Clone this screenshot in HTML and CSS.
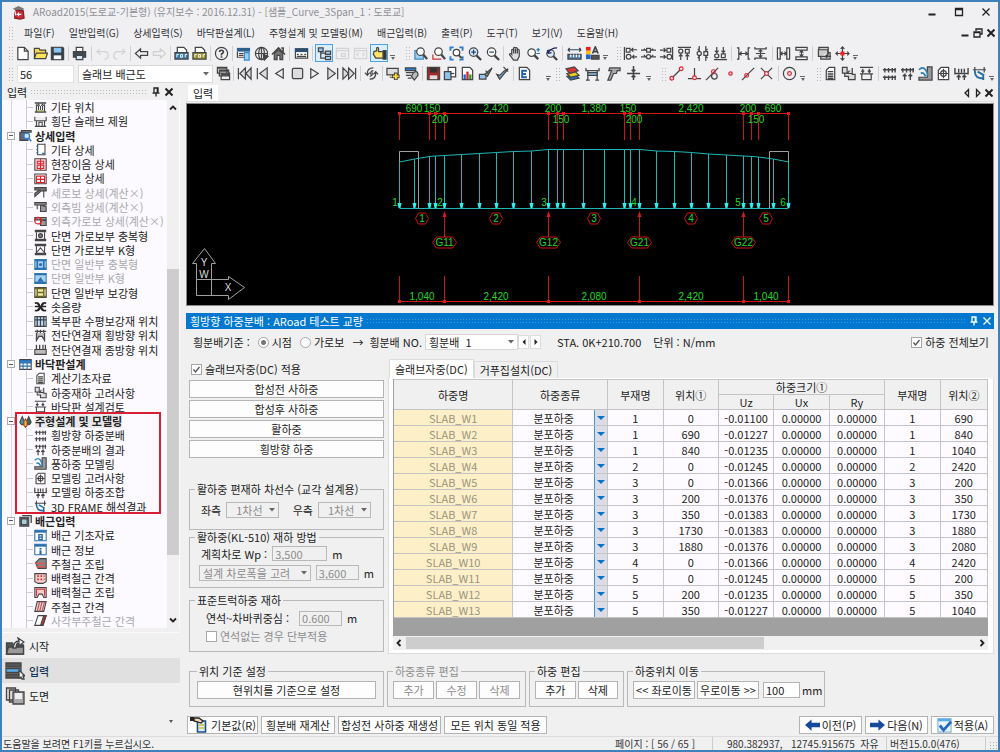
FILE: index.html
```html
<!DOCTYPE html>
<html lang="ko">
<head>
<meta charset="utf-8">
<title>ARoad2015</title>
<link rel="stylesheet" href="styles.css">
</head>
<body>
<svg class="sprite" aria-hidden="true">
  <symbol id="app" viewBox="0 0 16 16"><path d="M2 4l6-3 6 3-2 2H4z" fill="#777" stroke="none"/><path d="M4 6h9l1 8-4 1-6-1z" fill="#c92b35" stroke="#8d1b25"/><path d="M1 5l3 1 1 5M6 10h5M8 8v4" stroke="#fff"/></symbol>
  <symbol id="new" viewBox="0 0 16 16"><path d="M3 1.500h7l4 4v9H3zM10 1.500v4h4" fill="#fff"/></symbol>
  <symbol id="open" viewBox="0 0 16 16"><path d="M1.500 13.500v-11h5l1 2h6v3" fill="#f6d94c"/><path d="M1.500 13.500l2-6h12l-2 6z" fill="#ffe45c"/></symbol>
  <symbol id="save" viewBox="0 0 16 16"><path d="M1.500 1.500h12l1 1v12h-13z" fill="#33414f"/><path d="M4 2h8v5H4z" fill="#8cc4ee" stroke="none"/><path d="M4 10h8v4H4z" fill="#fff" stroke="none"/></symbol>
  <symbol id="print" viewBox="0 0 16 16"><path d="M4.500 6V1.500h7V6" fill="#fff"/><path d="M1.500 6h13v6h-13z" fill="#3f4a55"/><path d="M4.500 10h7v4.500h-7z" fill="#d5e7f5"/></symbol>
  <symbol id="undo" viewBox="0 0 16 16"><path d="M5 3L2 6l4 3M2 6h8q4 0 4 4t-4 4" stroke="#d2d2d2"/></symbol>
  <symbol id="redo" viewBox="0 0 16 16"><path d="M11 3l3 3-4 3M14 6H6q-4 0-4 4t4 4" stroke="#d2d2d2"/></symbol>
  <symbol id="back" viewBox="0 0 16 16"><path d="M1.500 8L7 3v3h7.500v4H7v3z"/></symbol>
  <symbol id="fwd" viewBox="0 0 16 16"><path d="M14.500 8L9 3v3H1.500v4H9v3z" stroke="#cfcfcf"/></symbol>
  <symbol id="pdf" viewBox="0 0 16 16"><path d="M3.500 13V1.500h7l3 3V13" fill="#fff"/><path d="M1 7h14v7H1z" fill="#3978ad"/><path d="M3 12V9h2M7 12V9h2v3zM12 12V9h2" stroke="#fff" stroke-width="1"/></symbol>
  <symbol id="pdf2" viewBox="0 0 16 16"><path d="M3.500 13V1.500h7l3 3V13" fill="#fff"/><path d="M1 7h14v7H1z" fill="#9a9230"/><path d="M3 12V9h2M7 12V9h2v3zM12 12V9h2" stroke="#fff" stroke-width="1"/></symbol>
  <symbol id="help" viewBox="0 0 16 16"><circle cx="8" cy="8" r="6.500"/><path d="M6 6.500q0-2 2-2t2 2q0 1-2 2V10M8 11v1.500" stroke-width="1.800"/></symbol>
  <symbol id="win" viewBox="0 0 16 16"><path d="M1 2h14v4H1z" fill="#2f5f8c" stroke="none"/><path d="M1.500 6v6h8" fill="#fff"/><path d="M3 8h5M3 10h5"/><path d="M9 7h5v8H9z" fill="#9fd0f3" stroke="#3b8bc8"/></symbol>
  <symbol id="globe" viewBox="0 0 16 16"><circle cx="8" cy="8" r="6.500"/><ellipse cx="8" cy="8" rx="3" ry="6.500"/><path d="M1.500 8h13M8 1.500v13"/><path d="M10 9l5 2-4 4z" fill="#444"/></symbol>
  <symbol id="home" viewBox="0 0 16 16"><path d="M1 9l7-7 7 7M11 2h2v4" stroke-width="1.600"/><path d="M3.500 8v6.500h3V10h3v4.500h3V8L8 4z" fill="#777"/></symbol>
  <symbol id="win2" viewBox="0 0 16 16"><path d="M1.500 3h13v10h-13z" fill="#fff"/><path d="M1 2.500h14v4H1z" fill="#2f4f72" stroke="none"/><path d="M3 9h2M7 9h2M11 9h2M3 11h10"/></symbol>
  <symbol id="outline" viewBox="0 0 16 16"><path d="M4 6v7h5M4 7.500h5"/><path d="M1.500 2h5v4h-5zM9 5.500h5.500v3.500H9zM9 11h5.500v3.500H9z" fill="#9cc9f0"/></symbol>
  <symbol id="pan1" viewBox="0 0 16 16"><path d="M1.500 2.500h13v11h-13zM1.500 5h13M7 8h4v3H7z" stroke="#d4d4d4"/></symbol>
  <symbol id="pan2" viewBox="0 0 16 16"><path d="M1.500 2.500h13v11h-13zM1.500 5h13M6 7L4 9l2 2M10 7l2 2-2 2" stroke="#d4d4d4"/></symbol>
  <symbol id="point" viewBox="0 0 16 16"><path d="M2 6l3-1V2q2-1 2 1v3h5v7H4L1.500 9z" fill="#ffe36b"/><path d="M12 5h3v9h-3z" fill="#333"/></symbol>
  <symbol id="zpage" viewBox="0 0 16 16"><path d="M2 5h9v9H2z" fill="#9fd0f3" stroke="#3b8bc8"/><circle cx="8" cy="6" r="4" fill="#fff"/><path d="M11 9l4 5" stroke-width="2.400"/></symbol>
  <symbol id="zall" viewBox="0 0 16 16"><path d="M2 9v5h9" stroke="#c33"/><circle cx="8" cy="6" r="4" fill="#fff"/><path d="M11 9l4 5" stroke-width="2.400"/></symbol>
  <symbol id="zext" viewBox="0 0 16 16"><path d="M1.500 5V1.500H5M11 1.500h3.500V5M1.500 11v3.500H5M14.500 11v3.500H11" stroke="#2c7fd0" stroke-width="2"/><circle cx="8" cy="7" r="3.500" fill="#fff"/><path d="M10.500 10l3 3" stroke-width="2"/></symbol>
  <symbol id="zin" viewBox="0 0 16 16"><circle cx="7" cy="6.500" r="4.500" fill="#d8eafa"/><path d="M10 10l5 5" stroke-width="2.400"/><path d="M4.500 6.500h5M7 4v5" stroke="#246"/></symbol>
  <symbol id="zout" viewBox="0 0 16 16"><circle cx="7" cy="6.500" r="4.500" fill="#fff"/><path d="M10 10l5 5" stroke-width="2.400"/><path d="M4.500 6.500h5" stroke="#246"/></symbol>
  <symbol id="pan" viewBox="0 0 16 16"><path d="M4 9V4q1-1 2 0V2q1-1 2 0v0q1-1 2 1v1q2-1 2 1v6l-2 4H6L1.500 9q1-2 2.500 0z" fill="#ddd"/><path d="M6 4v4M8 3v5M10 4v4"/></symbol>
  <symbol id="zdyn" viewBox="0 0 16 16"><circle cx="6" cy="7" r="4" fill="#fff"/><path d="M9 10l4 4" stroke-width="2.400"/><path d="M11 4h4M13 2v4M11 8h4" stroke="#27b"/></symbol>
  <symbol id="zprev" viewBox="0 0 16 16"><circle cx="7" cy="8" r="4" fill="#d8eafa"/><path d="M10 11l4 4" stroke-width="2.400"/><path d="M4 8q3-6 10-6M4 8V4M4 8l4-1" stroke="#226"/></symbol>
  <symbol id="rule" viewBox="0 0 16 16"><path d="M1 4h14M1 4l2-2M1 4l2 2M15 4l-2-2M15 4l-2 2" stroke="#345"/><path d="M1 9h14v5H1z" fill="#4c7fae"/><path d="M4 9v3M7 9v3M10 9v3M13 9v3" stroke="#fff"/></symbol>
  <symbol id="color" viewBox="0 0 16 16"><path d="M1 1h5v4H1z" fill="#e22" stroke="none"/><path d="M1 5h5v4H1z" fill="#fb0" stroke="none"/><path d="M1 9h5v5H1z" fill="#26c" stroke="none"/><path d="M8 8l3-7 3 7M9 6h4" stroke-width="1.800"/><path d="M7 10h8v4H7z" fill="#555"/></symbol>
  <symbol id="al1" viewBox="0 0 16 16"><path d="M1.500 1v14M3.500 2.500h4v4h-4z"/><circle cx="6" cy="11.500" r="2.500"/><path d="M15 4H9l2-2M9 4l2 2M15 11.500h-5l2-2M10 11.500l2 2"/></symbol>
  <symbol id="al2" viewBox="0 0 16 16"><path d="M6 2.500h4v4H6zM0 4.500h5L3 3M16 4.500h-5l2-1.500M0 11.500h5l-2-2M16 11.500h-5l2-2"/><circle cx="8" cy="11.500" r="2.200"/></symbol>
  <symbol id="al3" viewBox="0 0 16 16"><path d="M14.500 1v14M8.500 2.500h4v4h-4zM1 4.500h6L5 2M7 4.500L5 6.500M1 11.500h6l-2-2M7 11.500l-2 2"/><circle cx="11" cy="11.500" r="2.500"/></symbol>
  <symbol id="al4" viewBox="0 0 16 16"><path d="M1 1.500h14M9 3.500h4v4H9zM4 15V9L2 11M4 9l2 2M11 15V9l-2 2M11 9l2 2"/><circle cx="4" cy="5.500" r="2.200"/></symbol>
  <symbol id="al5" viewBox="0 0 16 16"><path d="M9.500 6h4v4h-4zM4.500 0v5L3 3M4.500 16v-5L3 13M11.500 0v5l2-2M11.500 16v-5l2 2"/><circle cx="4.500" cy="8" r="2.200"/></symbol>
  <symbol id="al6" viewBox="0 0 16 16"><path d="M1 14.500h14M9 8.500h4v4H9zM4 1v6L2 5M4 7l2-2M11 1v6L9 5M11 7l2-2"/><circle cx="4" cy="10.500" r="2.200"/></symbol>
  <symbol id="sp1" viewBox="0 0 16 16"><path d="M1 2h2v12H1M15 2h-2v12h2M4 8h8M6 6L4 8l2 2M10 6l2 2-2 2"/></symbol>
  <symbol id="sp2" viewBox="0 0 16 16"><path d="M2 1v2h12V1M2 15v-2h12v2M8 4v8M6 6l2-2 2 2M6 10l2 2 2-2M3 8h10"/></symbol>
  <symbol id="sp3" viewBox="0 0 16 16"><path d="M1.500 2h3v12h-3zM11.500 2h3v12h-3zM5 8h6M7 6L5 8l2 2M9 6l2 2-2 2"/></symbol>
  <symbol id="sp4" viewBox="0 0 16 16"><path d="M2 1.500h12v3H2zM2 11.500h12v3H2zM8 5v6M6 7l2-2 2 2M6 9l2 2 2-2"/></symbol>
  <symbol id="stackw" viewBox="0 0 16 16"><path d="M2 4V1.500h10V9M1.500 4h10v7h-10zM4 11v3h10V7h-2" fill="#ccc"/><path d="M15 11H9l2-2M9 11l2 2"/></symbol>
  <symbol id="move" viewBox="0 0 16 16"><path d="M8 1v14M1 8h14M6 3l2-2 2 2M6 13l2 2 2-2M3 6L1 8l2 2M13 6l2 2-2 2"/><path d="M6.500 6.500h3v3h-3z" fill="#e22" stroke="#e22"/></symbol>
  <symbol id="casc" viewBox="0 0 16 16"><path d="M1.500 1.500h10v6h-10zM3.500 4.500h10v6h-10zM5.500 7.500h9v7h-9z" fill="#eee"/><path d="M2 2h9M4 5h9M6 9h8" stroke-width="2"/></symbol>
  <symbol id="ff0" viewBox="0 0 16 16"><path d="M1.500 2v12M9 2L3 8l6 6zM15 2L9.500 8l5.500 6z" fill="#ddd"/></symbol>
  <symbol id="f0" viewBox="0 0 16 16"><path d="M2.500 2v12M13 2L5 8l8 6z" fill="#ddd"/></symbol>
  <symbol id="pv" viewBox="0 0 16 16"><path d="M12 3L4 8l8 5z" fill="#eee"/></symbol>
  <symbol id="stop" viewBox="0 0 16 16"><rect x="2.500" y="2.500" width="11" height="11" rx="1.500" fill="#ddd"/></symbol>
  <symbol id="nx" viewBox="0 0 16 16"><path d="M4 3l8 5-8 5z" fill="#eee"/></symbol>
  <symbol id="f1" viewBox="0 0 16 16"><path d="M13.500 2v12M3 2l8 6-8 6z" fill="#ddd"/></symbol>
  <symbol id="ff1" viewBox="0 0 16 16"><path d="M14.500 2v12M1 2l6 6-6 6zM7 2l6 6-6 6z" fill="#ddd"/></symbol>
  <symbol id="sync" viewBox="0 0 16 16"><path d="M10 2Q3 2 3.500 9M1 7l2.500 3L6 7M6 14q7 0 6.500-7M10 9l2.500-3L15 9M10 5q-3 0-3 4M6 11q3 0 3-4"/></symbol>
  <symbol id="addw" viewBox="0 0 16 16"><path d="M1 2.500h12v7H1zM4 12h5" fill="#ddd"/><path d="M10.500 7v8M6.500 11h8" stroke="#444" stroke-width="4"/><path d="M10.500 8v6M7.500 11h6" stroke="#fd3" stroke-width="2"/></symbol>
  <symbol id="cfg" viewBox="0 0 16 16"><path d="M1.500 2h11v3h-11z" fill="#2c7fd0"/><path d="M2 7h8M2 10h6M4 13h4"/><path d="M10 7q5-3 5 3l-4 5-3-4z" fill="#bbb"/></symbol>
  <symbol id="redsave" viewBox="0 0 16 16"><path d="M1.500 1.500h13v13h-13z" fill="#a12a2a"/><path d="M4 2h8v5H4z" fill="#333" stroke="none"/><path d="M4 10h8v4H4z" fill="#ddd" stroke="none"/></symbol>
  <symbol id="docs" viewBox="0 0 16 16"><path d="M5.500 1.500h8v10h-8z" fill="#fff"/><path d="M1.500 6h7v8.500h-7z" fill="#8ec1ec"/><path d="M8 8h4"/></symbol>
  <symbol id="chart" viewBox="0 0 16 16"><path d="M2.500 1.500h8l3 3v10h-11z" fill="#fff"/><path d="M5 14V9" stroke="#26c" stroke-width="2.500"/><path d="M8 14V6" stroke="#d22" stroke-width="2.500"/><path d="M11 14V9" stroke="#292" stroke-width="2.500"/></symbol>
  <symbol id="brush" viewBox="0 0 16 16"><path d="M1.500 9h7v5h-7z" fill="#9cc5ea"/><path d="M15 2l-5 9-3-2zM8 5l3 3" fill="#999"/></symbol>
  <symbol id="check" viewBox="0 0 16 16"><path d="M2 9l3 5 9-11-4 2-5 5z" fill="#7fa9cf"/><path d="M9 1l5 5"/></symbol>
  <symbol id="edoc" viewBox="0 0 16 16"><path d="M2.500 1.500h8l3 3v10h-11z" fill="#fff"/><path d="M10.500 5h-5v7h5M5.500 8.500h4" stroke="#1e5fae" stroke-width="2"/></symbol>
  <symbol id="layers" viewBox="0 0 16 16"><path d="M2 11l9-2 4 4-9 2z" fill="#2a6fc0"/><path d="M2 8l9-2 4 4-9 2z" fill="#ecc820"/><path d="M1 3l9-2 4 4-9 3z" fill="#d33"/></symbol>
  <symbol id="bridge" viewBox="0 0 16 16"><path d="M1 2v3h14V2M3 5v10M13 5v10M1 15h4M11 15h4"/><path d="M3 7h10v3H3z" fill="#8ec1ec"/></symbol>
  <symbol id="drill" viewBox="0 0 16 16"><path d="M4 2h11v3h-3l-1 3H8l-3 7H2l4-10H3z" fill="#aaa"/></symbol>
  <symbol id="split" viewBox="0 0 16 16"><path d="M8 0v15M1 8h14M6 4l2 2 2-2M6 12l2-2 2 2" stroke-width="1.600"/></symbol>
  <symbol id="sn1" viewBox="0 0 16 16"><path d="M4 12l8-8"/><circle cx="3" cy="13" r="2" stroke="#d23"/><circle cx="13" cy="3" r="2" stroke="#d23"/></symbol>
  <symbol id="sn2" viewBox="0 0 16 16"><path d="M8 2v9M1 13.500h5M10 13.500h5"/><circle cx="8" cy="12.500" r="2" stroke="#d23"/></symbol>
  <symbol id="sn3" viewBox="0 0 16 16"><path d="M1 15L14 2"/><circle cx="10" cy="11" r="3"/><circle cx="9" cy="6" r="2" stroke="#d23"/></symbol>
  <symbol id="sn4" viewBox="0 0 16 16"><circle cx="8" cy="8" r="1.800" stroke="#d23"/></symbol>
  <symbol id="sn5" viewBox="0 0 16 16"><path d="M1 15L14 2"/><circle cx="6" cy="10" r="2" stroke="#d23"/></symbol>
  <symbol id="sn6" viewBox="0 0 16 16"><path d="M2 2l12 12M14 2L2 14"/><circle cx="8" cy="8" r="2" stroke="#d23" fill="#fff"/></symbol>
  <symbol id="target" viewBox="0 0 16 16"><circle cx="8" cy="8" r="6.500"/><circle cx="8" cy="8" r="2" stroke="#d23"/></symbol>
  <symbol id="calc" viewBox="0 0 16 16"><path d="M3.500 4.500l3-3h6v13h-9z" fill="#fff"/><path d="M5 6h6M5 8.500h6M5 11h6M5 13h6" stroke-width="1.500"/></symbol>
  <symbol id="cond" viewBox="0 0 16 16"><path d="M1.500 1.500h5v6h-5zM4 8v3h4v3.500h7V9h-3V2M9 5l-2 3h5" fill="#ddd"/></symbol>
  <symbol id="deck" viewBox="0 0 16 16"><path d="M1 1.500h14M1 8.500h14M3 8.500v6h10v-6M4 3v4M2.500 5L4 7l1.500-2M11 3v4M9.500 5L11 7l1.500-2"/></symbol>
  <symbol id="dist" viewBox="0 0 16 16"><path d="M1 4h14M1 12h14M3 2v5M7 2v5M11 2v5M14 2v5M3 10v5M7 10v5M11 10v5M14 10v5" stroke-width="1.500"/></symbol>
  <symbol id="dres" viewBox="0 0 16 16"><path d="M1 4h14M3 2v5M7 2v5M11 2v5M14 2v5M5 15V9L3 11M5 9l2 2M11 15V9l-2 2M11 9l2 2" stroke-width="1.500"/></symbol>
  <symbol id="wind" viewBox="0 0 16 16"><path d="M10 1h5v14H1v-3h9z" fill="#999"/><path d="M1 4q4-4 7 0t2 7M3 8q3-2 5 3" stroke="#2c7fb8" stroke-width="1.800"/></symbol>
  <symbol id="mcon" viewBox="0 0 16 16"><path d="M2.500 4.500l3-3h8v13h-11z" fill="#fff"/><circle cx="8" cy="8" r="3"/><path d="M8 3v10M3 8h10"/></symbol>
  <symbol id="comb" viewBox="0 0 16 16"><path d="M1 2v7M15 2v7M1 8h14M5 3v4M8 3v4M11 3v4M5 15v-5l-2 2M5 10l2 2M11 15v-5l-2 2M11 10l2 2" stroke-width="1.500"/></symbol>
  <symbol id="frame" viewBox="0 0 16 16"><path d="M1 4h14M3 1v6M13 1v6"/><path d="M3 5q0 9 9 8M12 10v5M6 6l7 4" stroke="#246fa8" stroke-width="2"/></symbol>
  <symbol id="pos" viewBox="0 0 16 16"><path d="M1 2.500h14M1 13.500h14" stroke-width="2"/><path d="M3 4v9M13 4v9M5.500 6v5M8 6v5M10.500 6v5M4 6l1.500-2L7 6M9 6l1.500-2L12 6"/><path d="M4 12h8" stroke="#a8c040"/></symbol>
  <symbol id="slab" viewBox="0 0 16 16"><path d="M1 2v5h14V2M3 7v7h3V9h4v5h3V7M1 14h14" fill="#eee"/></symbol>
  <symbol id="detail" viewBox="0 0 16 16"><path d="M1 4h10v10H1z" fill="#667"/><path d="M3 2h12v2H3z" fill="#999"/><circle cx="9.500" cy="8.500" r="3.500" fill="#cfe8ff" stroke="#2c7fd0" stroke-width="1.600"/><path d="M12 11l3 4" stroke="#2c7fd0" stroke-width="2"/></symbol>
  <symbol id="etc" viewBox="0 0 16 16"><path d="M4.500 1.500h9v13h-9z" fill="#fff"/><path d="M3 4h2M3 8h2M3 12h2M10 13h3" stroke="#2c6fae" stroke-width="2"/></symbol>
  <symbol id="joint" viewBox="0 0 16 16"><path d="M1 1h14v14H1z" fill="#fbd5d5"/><path d="M4 4h8v3H4zM4 9h8v4H4zM8 1v14" stroke="#d23"/></symbol>
  <symbol id="cross" viewBox="0 0 16 16"><path d="M1 2.500h14v12H1z" fill="#fff"/><path d="M3 5h10v8H3zM3 9h10M8 5v8" stroke="#d23" stroke-width="1.500"/></symbol>
  <symbol id="beam" viewBox="0 0 16 16"><path d="M1 2h14v4H9L1 13v-4l6-4H1z" fill="#777"/><path d="M12 6v8"/></symbol>
  <symbol id="outer" viewBox="0 0 16 16"><path d="M1 2h14v3H1zM4 5v5M8 5v8h7V7z" fill="#999"/></symbol>
  <symbol id="outr" viewBox="0 0 16 16"><path d="M1 3h14v3H1zM8 6v7h7V7z" fill="#999"/><circle cx="5" cy="7" r="4" stroke="#d22" stroke-width="1.600"/></symbol>
  <symbol id="sec1" viewBox="0 0 16 16"><path d="M1 2.500h14M1 13.500h14" stroke-width="3"/><path d="M3 4v9M13 4v9"/><circle cx="8" cy="8" r="2.500" fill="#777"/></symbol>
  <symbol id="sec2" viewBox="0 0 16 16"><path d="M1 2.500h14M1 13.500h14" stroke-width="3"/><path d="M3 4v9M13 4v9M3 12l5-6 5 6"/></symbol>
  <symbol id="sec3" viewBox="0 0 16 16"><path d="M1 2h14v12H1z" fill="#a9d2f3" stroke="#2c7fb8"/><path d="M1 3h14M1 13h14M4 4v9M12 4v9" stroke="#2c6fae" stroke-width="2"/><circle cx="8" cy="8" r="2" fill="#2c6fae" stroke="none"/></symbol>
  <symbol id="sec4" viewBox="0 0 16 16"><path d="M1 2h14v12H1z" fill="#a9d2f3" stroke="#2c7fb8"/><path d="M1 3h14M1 13h14" stroke="#2c6fae" stroke-width="2"/><path d="M4 12l4-6 4 6z" fill="#2c6fae" stroke="none"/></symbol>
  <symbol id="sec5" viewBox="0 0 16 16"><path d="M1 2h14v12H1z" fill="#f3eda0"/><path d="M1 3h14M1 13h14M4 4v9M12 4v9M4 8h8" stroke="#6b6528" stroke-width="1.700"/></symbol>
  <symbol id="camber" viewBox="0 0 16 16"><path d="M1 4q5-2 6 4t-6 5M15 4Q10 2 9 8t6 5M1 8h14M4 4l8 9M12 4l-8 9" stroke="#222" stroke-width="2"/></symbol>
  <symbol id="web" viewBox="0 0 16 16"><path d="M1 2h14v12H1z" fill="#cfe0ee"/><path d="M4 2v12M8 2v12M12 2v12M1 6h14" stroke="#345" stroke-width="1.600"/></symbol>
  <symbol id="shear1" viewBox="0 0 16 16"><path d="M1 3h14M4 1v4M8 1v4M12 1v4M3 5v9l3-5h4l3 5V5" fill="#bbb" stroke-width="1.500"/></symbol>
  <symbol id="shear2" viewBox="0 0 16 16"><path d="M1 8h14v6H1z" fill="#bbb"/><path d="M3 2v6M7 2v6M11 2v6M14 2v6" stroke-width="1.600"/></symbol>
  <symbol id="grid" viewBox="0 0 16 16"><path d="M1 2h14v12H1z" fill="#fff"/><path d="M1 3h14v3H1z" fill="#2c7fd0" stroke="#2c6fae"/><path d="M1 10h14M5 6v8M10 6v8" stroke="#2c6fae"/></symbol>
  <symbol id="model" viewBox="0 0 16 16"><path d="M1 9l3-7 3 7q-3 6-6 0z" fill="#2c9fb8"/><path d="M9 9l3-7 3 7q-3 6-6 0z" fill="#2a6f50"/><path d="M6 8l2-3 2 3v5l-2 2-2-2z" fill="#f2b82c" stroke="#a33"/></symbol>
  <symbol id="rebar" viewBox="0 0 16 16"><path d="M1 4h11v11H1z" fill="#667"/><path d="M3 6h7v7H3z" fill="#a9cbd8"/><path d="M4 2h11v9" stroke-width="1.600"/></symbol>
  <symbol id="bi" viewBox="0 0 16 16"><path d="M1 1.500h14v13H1z" fill="#fff" stroke="#2c6fae"/><path d="M1 3h14" stroke="#2c6fae" stroke-width="3"/><path d="M6 7v6h4v-6zM6 10h4" stroke="#1e5fae" stroke-width="1.600"/></symbol>
  <symbol id="ii" viewBox="0 0 16 16"><path d="M1 1.500h14v13H1z" fill="#fff" stroke="#2c6fae"/><path d="M1 3h14" stroke="#2c6fae" stroke-width="3"/><path d="M8 9v5M8 6v2" stroke="#1e5fae" stroke-width="2.400"/></symbol>
  <symbol id="rb1" viewBox="0 0 16 16"><path d="M2 7l5-5h8v12H5z" fill="#888"/><path d="M1 8h13M3 12h11" stroke="#d55" stroke-width="2"/></symbol>
  <symbol id="rb2" viewBox="0 0 16 16"><path d="M1 2h14v10l-4 2H5l-4-2z" fill="#f6cccc"/><path d="M4 5h2M8 5h2M12 5h1M4 9h2M8 9h2M12 9h1" stroke="#c33" stroke-width="2"/></symbol>
  <symbol id="rb3" viewBox="0 0 16 16"><path d="M1 2h14v12h-3l-2-4H6l-2 4H1z" fill="#f6cccc"/><path d="M3 4h10M3 4v8M13 4v8" stroke="#c33"/></symbol>
  <symbol id="rb4" viewBox="0 0 16 16"><path d="M4 2h11l-3 12H1z" fill="#f6cccc"/><path d="M7 2L4 14M10 2L7 14M13 2l-3 12" stroke="#a55"/></symbol>
  <symbol id="rb5" viewBox="0 0 16 16"><path d="M5 2h10l-4 12H1z" fill="#fff"/><path d="M12 2h3l-4 12H8z" fill="#b33"/></symbol>
  <symbol id="start" viewBox="0 0 20 18"><path d="M1.500 6h6l1 2h10v9h-17z" fill="#555"/><path d="M1.500 17l2-7h15v7z" fill="#999"/><path d="M8 11q1-7 6-7l-1-3 6 4-5 4v-3q-3 0-3 5z" fill="#e8f0f6"/></symbol>
  <symbol id="input" viewBox="0 0 20 18"><path d="M1 1h15v4H1zM1 12h15v4H1z" fill="#555"/><path d="M1 6.500h15v4H1z" fill="#58aee8"/><path d="M14 8v8l2-1 1 2h2l-1-3h2z" fill="#eee"/></symbol>
  <symbol id="sheet" viewBox="0 0 20 18"><path d="M1.500 1h9v12h-9zM4.500 3h9v12h-9z" fill="#ddd"/><path d="M8 5h11v12H8z" fill="#aaa"/><path d="M10 6h7v6h-7z" fill="#eee" stroke="none"/></symbol>
  <symbol id="base" viewBox="0 0 20 18"><path d="M8.500 5h8v11h-8z" fill="#d9edfb" stroke="#1d4d85" stroke-width="1.600"/><path d="M10 9h5M10 12h5" stroke="#d4c322"/><path d="M1 1h4v4H1z" fill="#222" stroke="none"/><path d="M5 2h5l4 3-2 2-3-1-4-1z" fill="#f7d7b4" stroke="#222"/></symbol>
  <symbol id="arl" viewBox="0 0 16 12"><path d="M0 6l7-6v3.500h9v5H7V12z" fill="#164a9c" stroke="none"/></symbol>
  <symbol id="arr" viewBox="0 0 16 12"><path d="M16 6L9 0v3.500H0v5h9V12z" fill="#164a9c" stroke="none"/></symbol>
  <symbol id="apply" viewBox="0 0 16 16"><path d="M1 1h14v14H1z" fill="#eaf5fd" stroke="#8cb8d8"/><path d="M1 2h14" stroke="#5aaee6" stroke-width="3"/><path d="M3 8l4 5 8-9" stroke="#2569c8" stroke-width="3"/></symbol>
  <symbol id="pin" viewBox="0 0 10 10"><path d="M3 1h4v5H3zM1.500 6.200h7M5 6v3.500M6.300 1v5"/></symbol>
  <symbol id="x" viewBox="0 0 10 10"><path d="M1.500 1.500l7 7M8.500 1.500l-7 7"/></symbol>
  <symbol id="min" viewBox="0 0 10 10"><path d="M1.500 7.500h7" stroke-width="2"/></symbol>
  <symbol id="max" viewBox="0 0 10 10"><path d="M1.500 1.500h7v7h-7zM1.500 2.500h7"/></symbol>
  <symbol id="rest" viewBox="0 0 10 10"><path d="M3 3V1h6v5H7M1 4h6v5H1zM1 4.500h6"/></symbol>
  <symbol id="up" viewBox="0 0 10 10"><path d="M2 6.500l3-3 3 3"/></symbol>
  <symbol id="dn" viewBox="0 0 10 10"><path d="M2 3.500l3 3 3-3"/></symbol>
  <symbol id="lf" viewBox="0 0 10 10"><path d="M6.500 2l-3 3 3 3"/></symbol>
  <symbol id="rt" viewBox="0 0 10 10"><path d="M3.500 2l3 3-3 3"/></symbol>
  <symbol id="tl" viewBox="0 0 10 10"><path d="M6.500 1.500v7L3 5z"/></symbol>
  <symbol id="tr" viewBox="0 0 10 10"><path d="M3.500 1.500v7L7 5z"/></symbol>
  <symbol id="tlf" viewBox="0 0 10 10"><path d="M6.500 2v6L3.500 5z" fill="#222" stroke="none"/></symbol>
  <symbol id="trf" viewBox="0 0 10 10"><path d="M3.500 2v6l3-3z" fill="#222" stroke="none"/></symbol>
</svg>

<div class="window">
  <header class="titlebar">
    <svg class="ic app-icon"><use href="#app"/></svg>
    <h1 class="title">ARoad2015(도로교-기본형) (유지보수 : 2016.12.31) - [샘플_Curve_3Span_1 : 도로교]</h1>
    <div class="win-controls">
      <button class="bare" aria-label="최소화"><svg class="sm"><use href="#min"/></svg></button>
      <button class="bare" aria-label="최대화"><svg class="sm"><use href="#max"/></svg></button>
      <button class="bare" aria-label="닫기"><svg class="sm"><use href="#x"/></svg></button>
    </div>
  </header>
  <nav class="menubar">
    <span class="grip"></span>
    <div class="menus">
      <button class="menu">파일(F)</button><button class="menu">일반입력(G)</button><button class="menu">상세입력(S)</button><button class="menu">바닥판설계(L)</button><button class="menu">주형설계 및 모델링(M)</button><button class="menu">배근입력(B)</button><button class="menu">출력(P)</button><button class="menu">도구(T)</button><button class="menu">보기(V)</button><button class="menu">도움말(H)</button>
    </div>
    <div class="mdi-controls">
      <button class="bare" aria-label="문서 최소화"><svg class="sm"><use href="#min"/></svg></button>
      <button class="bare" aria-label="문서 복원"><svg class="sm"><use href="#rest"/></svg></button>
      <button class="bare bold" aria-label="문서 닫기"><svg class="sm"><use href="#x"/></svg></button>
    </div>
  </nav>
  <div class="toolbar">
    <div class="band band-file" data-tools="grip new open save | print | undo redo | back fwd | pdf pdf2 | help | win globe home | win2 | *outline pan1 pan2 *point ovf"></div>
    <div class="band band-zoom" data-tools="grip zpage zall zext zin zout | pan zdyn zprev | rule color ovf"></div>
    <div class="band band-align" data-tools="grip al1 al2 al3 al4 al5 al6 | sp1 sp2 | sp3 sp4 | stackw move ovf"></div>
  </div>
  <div class="toolbar">
    <div class="page-pick">
      <span class="grip"></span>
      <input class="page-no" aria-label="도면 번호" value="56">
      <select class="select page-name" aria-label="도면 이름"><option>슬래브 배근도</option></select>
    </div>
    <div class="band band-play" data-tools="casc | ff0 f0 pv stop nx f1 ff1 | sync | addw cfg | redsave docs chart brush check | edoc"></div>
    <div class="band band-view" data-tools="dbl grip layers bridge drill split ovf"></div>
    <div class="band band-snap" data-tools="grip sn1 sn2 sn3 sn4 sn5 sn6 | target ovf"></div>
    <div class="band band-model" data-tools="grip calc cond deck | dist dres wind mcon comb frame ovf"></div>
  </div>

  <div class="work">
    <aside class="side">
      <div class="pane-head">
        <span>입력</span><span class="hatch"></span>
        <button class="bare" aria-label="고정"><svg class="sm"><use href="#pin"/></svg></button>
        <button class="bare bold" aria-label="닫기"><svg class="sm"><use href="#x"/></svg></button>
      </div>
      <div class="tree-box">
        <div class="tree" id="nav-tree"></div>
        <div class="vbar">
          <svg class="sm"><use href="#up"/></svg>
          <div class="vtrack"><div class="vthumb"></div></div>
          <svg class="sm"><use href="#dn"/></svg>
        </div>
      </div>
      <nav class="sections">
        <button class="section"><svg class="ic big"><use href="#start"/></svg>시작</button>
        <button class="section current"><svg class="ic big"><use href="#input"/></svg>입력</button>
        <button class="section"><svg class="ic big"><use href="#sheet"/></svg>도면</button>
        <button class="more" aria-label="더 보기"></button>
      </nav>
    </aside>

    <main class="main">
      <div class="doc-tabs">
        <button class="doc-tab">입력</button>
        <div class="tab-nav">
          <button class="bare" aria-label="이전 탭"><svg class="sm"><use href="#tl"/></svg></button>
          <button class="bare" aria-label="다음 탭"><svg class="sm"><use href="#tr"/></svg></button>
          <button class="bare bold" aria-label="탭 닫기"><svg class="sm"><use href="#x"/></svg></button>
        </div>
      </div>
      <div class="canvas"><svg class="drawing" id="drawing" viewBox="187 104 806 201"></svg></div>

      <section class="panel">
        <div class="panel-head">
          <h2 class="panel-title">횡방향 하중분배 : ARoad 테스트 교량</h2><span class="hatch light"></span>
          <button class="bare" aria-label="고정"><svg class="sm"><use href="#pin"/></svg></button>
          <button class="bare" aria-label="닫기"><svg class="sm"><use href="#x"/></svg></button>
        </div>
        <div class="criteria">
          <span>횡분배기준 :</span>
          <label class="opt"><input type="radio" name="base" checked>시점</label>
          <label class="opt"><input type="radio" name="base">가로보</label>
          <span class="arrow">→</span>
          <label for="distno">횡분배 NO.</label>
          <select id="distno" class="select dist-no"><option>횡분배&nbsp; 1</option></select>
          <div class="spin">
            <button aria-label="이전"><svg class="sm"><use href="#tlf"/></svg></button>
            <button aria-label="다음"><svg class="sm"><use href="#trf"/></svg></button>
          </div>
          <span class="sta">STA. 0K+210.700</span>
          <span>단위 : N/mm</span>
          <label class="opt view-all"><input type="checkbox" checked>하중 전체보기</label>
        </div>

        <div class="body">
          <div class="form">
            <label class="opt apply-dc"><input type="checkbox" checked>슬래브자중(DC) 적용</label>
            <div class="stack">
              <button class="btn">합성전 사하중</button>
              <button class="btn">합성후 사하중</button>
              <button class="btn">활하중</button>
              <button class="btn">횡방향 하중</button>
            </div>
            <fieldset class="group lanes">
              <legend>활하중 편재하 차선수 (교각 설계용)</legend>
              <div class="line spread">
                <label for="ll">좌측</label><select id="ll" class="select lane" disabled><option>1차선</option></select>
                <label for="lr" class="right-lane">우측</label><select id="lr" class="select lane" disabled><option>1차선</option></select>
              </div>
            </fieldset>
            <fieldset class="group method">
              <legend>활하중(KL-510) 재하 방법</legend>
              <div class="line"><label for="wp">계획차로 Wp :</label><input id="wp" class="text wide" value="3,500" disabled><span>m</span></div>
              <div class="line"><select class="select lane-opt" aria-label="차로폭" disabled><option>설계 차로폭을 고려</option></select><input class="text" aria-label="차로폭 값" value="3,600" disabled><span>m</span></div>
            </fieldset>
            <fieldset class="group truck">
              <legend>표준트럭하중 재하</legend>
              <div class="line"><label for="curb">연석~차바퀴중심 :</label><input id="curb" class="text curb" value="0.600" disabled><span>m</span></div>
              <label class="opt off"><input type="checkbox" disabled>연석없는 경우 단부적용</label>
            </fieldset>
          </div>

          <div class="grid-side">
            <div class="tabs">
              <button class="tab on">슬래브자중(DC)</button><button class="tab">거푸집설치(DC)</button>
            </div>
            <div class="sheet">
              <div class="sheet-area">
                <table class="loads">
                  <colgroup><col class="c-name"><col class="c-kind"><col><col><col><col><col><col><col class="c-last"></colgroup>
                  <thead>
                    <tr><th rowspan="2">하중명</th><th rowspan="2">하중종류</th><th rowspan="2">부재명</th><th rowspan="2">위치①</th><th colspan="3">하중크기①</th><th rowspan="2">부재명</th><th rowspan="2">위치②</th></tr>
                    <tr><th>Uz</th><th>Ux</th><th>Ry</th></tr>
                  </thead>
                  <tbody id="rows"></tbody>
                </table>
              </div>
              <div class="hbar">
                <svg class="sm"><use href="#lf"/></svg>
                <div class="htrack"><div class="hthumb"></div></div>
                <svg class="sm"><use href="#rt"/></svg>
              </div>
            </div>
          </div>
        </div>

        <div class="edits">
          <fieldset class="group edit base-set"><legend>위치 기준 설정</legend><div class="btns"><button class="btn">현위치를 기준으로 설정</button></div></fieldset>
          <fieldset class="group edit kind-set off"><legend>하중종류 편집</legend><div class="btns"><button class="btn" disabled>추가</button><button class="btn" disabled>수정</button><button class="btn" disabled>삭제</button></div></fieldset>
          <fieldset class="group edit load-set"><legend>하중 편집</legend><div class="btns"><button class="btn">추가</button><button class="btn">삭제</button></div></fieldset>
          <fieldset class="group edit move-set"><legend>하중위치 이동</legend><div class="btns"><button class="btn">&lt;&lt; 좌로이동</button><button class="btn">우로이동 &gt;&gt;</button><input class="text step" id="step" value="100"><label for="step">mm</label></div></fieldset>
        </div>
      </section>

      <div class="actions">
        <button class="btn act-base"><svg class="ic big"><use href="#base"/></svg>기본값(R)</button>
        <button class="btn act-calc">횡분배 재계산</button>
        <button class="btn act-regen">합성전 사하중 재생성</button>
        <button class="btn act-same">모든 위치 동일 적용</button>
        <button class="btn act-nav push"><svg class="ic arrow-ic"><use href="#arl"/></svg>이전(P)</button>
        <button class="btn act-nav"><svg class="ic arrow-ic"><use href="#arr"/></svg>다음(N)</button>
        <button class="btn act-nav"><svg class="ic"><use href="#apply"/></svg>적용(A)</button>
      </div>
    </main>
  </div>

  <footer class="status">
    <span class="hint">도움말을 보려면 F1키를 누르십시오.</span>
    <span class="st-page">페이지 : [ 56 / 65 ]</span>
    <span class="st-pos">980.382937,&nbsp;&nbsp; 12745.915675&nbsp; 자유</span>
    <span class="st-ver">버전15.0.0(476)</span>
    <span class="st-grip"></span>
  </footer>
</div>
<script src="app.js"></script>
</body>
</html>
```
FILE: styles.css
```css
* { box-sizing: border-box; }
:root {
  --fs: 11px;
  --fs-small: 10px;
  --edge: #b9b9b9;
  --ink: #222;
  --mute: #8c8c8c;
  --dots: radial-gradient(#b8b8b8 30%, transparent 40%);
}
body { margin: 0; font: var(--fs)/14px "Noto Sans CJK KR", "Noto Sans", sans-serif; color: var(--ink); }
button, input, select { font: inherit; color: inherit; margin: 0; border-radius: 0; }
button { padding: 0; white-space: nowrap; }
h1, h2 { margin: 0; font-size: inherit; font-weight: 400; }
.sprite { position: absolute; width: 0; height: 0; }
.ic, .sm { fill: none; stroke: #444; stroke-width: 1.3; flex: none; display: block; }
.ic { width: 15px; height: 15px; }
.ic.big { width: 20px; height: 18px; }
.sm { width: 10px; height: 10px; stroke: #222; }
.bare { border: 0; background: none; }
.bold .sm { stroke-width: 2; }

.window { min-height: 100vh; display: flex; flex-direction: column; border: 2px solid #3f82bb; background: #f0f0f0; }
.titlebar { display: flex; align-items: center; height: 20px; padding: 0 7px 0 9px; background: #f0f0f3; }
.app-icon { margin-right: 7px; }
.title { flex: 1; color: #8f8f93; white-space: nowrap; font-size: var(--fs-small); }
.win-controls { display: flex; gap: 17px; }
.menubar { display: flex; align-items: center; height: 21px; padding: 0 2px 0 6px; background: #f0f0f3; }
.menus { display: flex; flex: 1; gap: 12px; margin-left: 10px; }
.menu { border: 0; background: none; color: #333; padding: 0 1px; font-size: var(--fs-small); }
.mdi-controls { display: flex; gap: 3px; }
.grip { width: 5px; height: 14px; flex: none; background: var(--dots) 0 0 / 3px 3px; }

.toolbar { display: flex; height: 20px; align-items: center; padding-left: 6px; background: #f0f0f3; }
.toolbar + .toolbar { height: 21px; }
.band { display: flex; align-items: center; justify-content: space-between; flex: none; }
.band-file { width: 388px; }
.band-zoom { width: 203px; margin-left: 9px; }
.band-align { width: 242px; margin-left: 8px; }
.band-play { width: 318px; }
.band-view { width: 107px; margin-left: 12px; }
.band-snap { width: 145px; margin-left: 9px; }
.band-model { width: 179px; margin-left: 10px; }
.tool { display: flex; align-items: center; justify-content: center; width: 16px; height: 17px; border: 0; background: none; }
.tool.on { width: 18px; height: 18px; border: 1px solid #4aa3e8; background: #dceefb; }
.tsep { width: 1px; height: 15px; background: #d0d0d0; margin: 0 1px; }
.ovf { width: 6px; height: 14px; border: 0; background: none; display: flex; flex-direction: column; align-items: center; justify-content: flex-end; gap: 1px; }
.ovf::before { content: ""; width: 5px; height: 1px; background: #666; }
.ovf::after { content: ""; border: 2px solid transparent; border-top: 3px solid #666; border-bottom: 0; }
.page-pick { display: flex; align-items: center; gap: 4px; margin-right: 2px; }
.page-no { width: 57px; height: 18px; border: 1px solid #e2e2e2; background: #fff; padding: 0 2px; }
.select { appearance: none; height: 16px; border: 1px solid #d8d8d8; padding: 0 12px 0 3px; background: #fff url("data:image/svg+xml,%3Csvg xmlns='http://www.w3.org/2000/svg' width='6' height='4'%3E%3Cpath d='M0 0h6L3 3.500z' fill='%23666'/%3E%3C/svg%3E") no-repeat right 3px center; line-height: 14px; }
.page-name { width: 135px; height: 18px; }

.work { display: flex; flex: 1; min-height: 0; }
.side { width: 178px; display: flex; flex-direction: column; }
.pane-head { display: flex; align-items: center; height: 16px; padding: 0 6px 0 5px; gap: 3px; }
.hatch { flex: 1; height: 6px; background: radial-gradient(#bcbcbc 35%, transparent 45%) 0 0 / 3px 3px; }
.tree-box { flex: 1; display: flex; background: #fcfaff; }
.tree { flex: 1; display: flex; flex-direction: column; min-width: 0; }
.branch { display: flex; flex-direction: column; flex-basis: 0; position: relative; background: linear-gradient(#e2d6e8, #e2d6e8) 9px 0 / 1px 100% no-repeat; }
.branch.marked::after { content: ""; position: absolute; inset: -2px 6px 0 13px; border: 2px solid #d81f34; pointer-events: none; }
.node { flex: 1 1 0; min-height: 0; display: flex; align-items: center; white-space: nowrap; line-height: 14px; }
.node .ic { width: 13px; height: 13px; }
.node.root { padding-left: 5px; font-weight: 700; gap: 3px; }
.marked .root .label { background: #e9e9ec; }
.toggle { width: 8px; height: 8px; border: 1px solid #aaa; background: linear-gradient(#557, #557) center / 4px 1px no-repeat #fff; margin-right: 1px; }
.node.leaf { padding-left: 32px; gap: 4px; background: linear-gradient(#ccc, #ccc) 24px 0 / 1px 100% no-repeat, linear-gradient(#ccc, #ccc) 24px 50% / 7px 1px no-repeat; }
.node.off .label { color: #a9a9ad; }
.vbar { width: 12px; display: flex; flex-direction: column; align-items: center; background: #f0f0f0; padding: 3px 0; margin-right: 1px; }
.vtrack { flex: 1; align-self: stretch; position: relative; }
.vthumb { position: absolute; left: 0; right: 0; top: 31%; height: 57%; background: #cdcdcd; }
.sections { display: flex; flex-direction: column; margin-top: 4px; border-top: 1px solid #fafafa; padding-bottom: 1px; }
.section { display: flex; align-items: center; gap: 4px; height: 25px; border: 0; background: none; padding: 0 3px; }
.section.current { background: #e0e0e0; color: #1b3555; font-weight: 500; }
.more { align-self: flex-end; width: 18px; height: 27px; border: 0; background: none; display: flex; align-items: center; justify-content: center; }
.more::after { content: ""; border: 2px solid transparent; border-top: 3px solid #555; border-bottom: 0; }

.main { flex: 1; min-width: 0; display: flex; flex-direction: column; padding: 0 4px 0 6px; }
.doc-tabs { display: flex; align-items: stretch; justify-content: space-between; height: 18px; border-bottom: 1px solid #dcdcdc; }
.doc-tab { width: 30px; border: 0; background: #fff; margin: 1px 0 0 2px; }
.tab-nav { display: flex; align-items: center; gap: 1px; }
.canvas { margin-top: 1px; border: 1px solid #8a8a8a; background: #000; }
.drawing { display: block; width: 100%; height: 201px; font-family: "Liberation Sans", sans-serif; font-size: 10px; text-anchor: middle; fill: none; }
.d-text { fill: #22d822; }
.d-white { fill: #ddd; }
.d-red { stroke: #d01414; }
.d-dot { fill: #e01818; }
.d-cyan { stroke: #22b6b6; }
.d-tip { fill: #2af0f0; }
.d-gray { stroke: #a0a0a0; }

.panel { flex: 1; display: flex; flex-direction: column; margin-top: 7px; }
.panel-head { display: flex; align-items: center; gap: 3px; height: 16px; background: #0078d0; color: #fff; padding: 0 2px 0 4px; }
.panel-head .sm { stroke: #fff; }
.hatch.light { background: radial-gradient(#3d9ce0 35%, transparent 45%) 0 0 / 3px 3px; }
.criteria { display: flex; align-items: center; height: 26px; padding: 0 5px 0 7px; }
.criteria > span, .criteria label { white-space: nowrap; }
.opt { display: flex; align-items: center; gap: 3px; }
.criteria .opt { margin-left: 8px; }
.criteria .arrow { margin: 0 6px 0 8px; }
input[type="radio"], input[type="checkbox"] { appearance: none; flex: none; width: 11px; height: 11px; border: 1px solid #a6a6a6; background: #fff; }
input[type="radio"] { border-radius: 50%; }
input[type="radio"]:checked { background: radial-gradient(#777 2px, #fff 3px); }
input[type="checkbox"]:checked { background: #fff url("data:image/svg+xml,%3Csvg xmlns='http://www.w3.org/2000/svg' width='9' height='9'%3E%3Cpath d='M1.500 4.500l2 2.500 4-5' fill='none' stroke='%23555' stroke-width='1.300'/%3E%3C/svg%3E") center no-repeat; }
.dist-no { width: 93px; margin-left: 3px; }
.spin { display: flex; gap: 1px; }
.spin button { width: 11px; height: 14px; border: 1px solid #ddd; background: #fff; display: flex; align-items: center; justify-content: center; }
.sta { margin: 0 12px 0 16px; }
.criteria .view-all { margin-left: auto; }

.body { display: flex; flex: 1; gap: 4px; padding-left: 3px; }
.form { width: 195px; flex: none; display: flex; flex-direction: column; }
.apply-dc { height: 16px; margin: 6px 0 3px 2px; }
.stack { display: grid; gap: 2px; }
.btn { height: 18px; border: 1px solid #b4b4b4; background: #fdfdfd; }
.btn:disabled { color: var(--mute); }
.group { min-width: 0; margin: 0; padding: 0 9px; border: 1px solid var(--edge); }
.group legend { margin-left: -4px; padding: 0 2px; height: 14px; }
.line { display: flex; align-items: center; gap: 5px; }
.text { width: 43px; height: 15px; border: 1px solid #b4b4b4; background: #fff; padding: 0 2px; }
.text:disabled, .select:disabled { background-color: #f0f0f0; color: var(--mute); border-color: #b9b9b9; opacity: 1; }
.lanes { margin-top: 24px; height: 48px; }
.lane { width: 53px; padding-left: 9px; }
.right-lane { margin-left: auto; }
.lanes .line { height: 28px; padding: 0 3px 0 2px; }
.method { height: 58px; }
.method .line { height: 19px; }
.text.wide { width: 55px; }
.method .line:first-of-type { padding-left: 2px; }
.lane-opt { width: 115px; }
.truck { margin-top: 5px; height: 59px; padding-left: 16px; }
.truck legend { margin-left: -11px; }
.truck .line { height: 22px; }
.text.curb { margin-left: 5px; }
.off { color: var(--mute); }

.grid-side { flex: 1; min-width: 0; display: flex; flex-direction: column; }
.tabs { display: flex; height: 19px; margin-top: 4px; padding-left: 1px; align-items: flex-end; }
.tab { height: 17px; padding: 0 5px; border: 1px solid #dcdcdc; border-bottom: 0; background: #f0f0f0; }
.tab.on { height: 19px; background: #fff; }
.sheet { flex: 1; display: flex; flex-direction: column; background: #fff; border: 1px solid #dcdcdc; border-top: 0; padding: 1px 5px 3px 4px; }
.sheet-area { flex: 1; background: #a0a0a0; padding-left: 1px; }
.loads { width: 100%; table-layout: fixed; border-collapse: collapse; text-align: center; background: #fff; }
.loads th, .loads td { height: 16px; padding: 0; line-height: 14px; font-weight: 400; border: 1px solid #c4c4c4; border-left: 0; }
.loads th { height: 15px; background: #f0f0f0; }
.loads td { background: #fdfbff; }
.loads td.name { background: #fdf0c8; color: #9b947f; }
.c-name { width: 20%; }
.c-kind { width: 16%; }
.c-last { width: 8%; }
.kind-pick { appearance: none; display: block; width: 100%; height: 15px; border: 0; padding: 0 13px 0 0; text-align: center; text-align-last: center; background: url("data:image/svg+xml,%3Csvg xmlns='http://www.w3.org/2000/svg' width='13' height='15'%3E%3Cpath d='M0 0h13v15H0z' fill='%23dcdce6'/%3E%3Cpath d='M0 0h1v15H0z' fill='%233a9ae0'/%3E%3Cpath d='M3 6h8L7 10z' fill='%230f6fc0'/%3E%3C/svg%3E") right center no-repeat; }
.hbar { display: flex; align-items: center; height: 14px; background: #f0f0f0; padding: 0 1px; }
.hbar .sm, .vbar .sm { stroke-width: 1.8; }
.htrack { flex: 1; align-self: stretch; padding: 1px 0; margin: 0 2px; }
.hthumb { width: 63%; height: 100%; background: #cdcdcd; }

.edits { display: flex; gap: 3px; padding: 10px 0 4px 3px; }
.edit { height: 43px; padding: 0 5px; }
.edit legend { margin-left: 0; }
.btns { display: flex; gap: 2px; align-items: center; height: 24px; }
.btns .btn { flex: 1; }
.base-set { width: 195px; padding: 0 7px; }
.kind-set { width: 139px; }
.load-set { width: 95px; }
.move-set { width: 198px; }
.move-set .btn { flex: 0 0 62px; }
.text.step { width: 37px; margin-left: 2px; height: 16px; }
.actions { display: flex; gap: 3px; margin: 5px 0 2px; padding-left: 1px; }
.actions .btn { display: flex; align-items: center; justify-content: center; gap: 2px; height: 18px; }
.act-base { width: 71px; }
.act-calc { width: 74px; }
.act-regen { width: 103px; }
.act-same { width: 103px; }
.act-nav { width: 63px; }
.push { margin-left: auto; }
.arrow-ic { height: 12px; }

.status { display: flex; height: 14px; border-top: 1px solid #dcdcdc; color: #333; white-space: nowrap; font-size: var(--fs-small); line-height: 13px; padding-left: 1px; }
.hint { flex: 1; }
.st-page { width: 97px; }
.st-pos { width: 174px; padding-left: 14px; border-left: 1px solid #ccc; }
.st-ver { width: 99px; padding-left: 3px; border-left: 1px solid #ccc; }
.st-grip { width: 13px; border-left: 1px solid #ccc; background: radial-gradient(#aaa 35%, transparent 45%) right bottom / 3px 3px; background-clip: content-box; padding: 5px 1px 1px 4px; }
```
FILE: app.js
```js
const icon = (id) => `<svg class="ic"><use href="#${id}"/></svg>`;

document.querySelectorAll("[data-tools]").forEach((band) => {
  band.innerHTML = band.dataset.tools.split(" ").map((name) => {
    if (name === "|") return '<span class="tsep"></span>';
    if (name === "grip") return '<span class="grip"></span>';
    if (name === "ovf" || name === "dbl") return '<button class="ovf" aria-label="더 보기"></button>';
    const on = name[0] === "*";
    const id = on ? name.slice(1) : name;
    return `<button class="tool${on ? " on" : ""}" aria-label="${id}">${icon(id)}</button>`;
  }).join("");
});

// Tree: a leading "-" marks a disabled entry.
const branches = [
  { leaves: [["pos", "기타 위치"], ["slab", "횡단 슬래브 제원"]] },
  { root: ["detail", "상세입력"], leaves: [
    ["etc", "기타 상세"], ["joint", "현장이음 상세"], ["cross", "가로보 상세"], ["beam", "-세로보 상세(계산×)"],
    ["outer", "-외측빔 상세(계산×)"], ["outr", "-외측가로보 상세(계산×)"], ["sec1", "단면 가로보부 충복형"],
    ["sec2", "단면 가로보부 K형"], ["sec3", "-단면 일반부 충복형"], ["sec4", "-단면 일반부 K형"],
    ["sec5", "단면 일반부 보강형"], ["camber", "솟음량"], ["web", "복부판 수평보강재 위치"],
    ["shear1", "전단연결재 횡방향 위치"], ["shear2", "전단연결재 종방향 위치"]] },
  { root: ["grid", "바닥판설계"], leaves: [["calc", "계산기초자료"], ["cond", "하중재하 고려사항"], ["deck", "바닥판 설계검토"]] },
  { marked: true, root: ["model", "주형설계 및 모델링"], leaves: [
    ["dist", "횡방향 하중분배"], ["dres", "하중분배의 결과"], ["wind", "풍하중 모델링"],
    ["mcon", "모델링 고려사항"], ["comb", "모델링 하중조합"], ["frame", "3D FRAME 해석결과"]] },
  { root: ["rebar", "배근입력"], leaves: [
    ["bi", "배근 기초자료"], ["ii", "배근 정보"], ["rb1", "주철근 조립"], ["rb2", "배력철근 간격"],
    ["rb3", "배력철근 조립"], ["rb4", "주철근 간격"], ["rb5", "-사각부주철근 간격"]] },
];
document.getElementById("nav-tree").innerHTML = branches.map((b) => {
  const root = b.root ? `<div class="node root"><span class="toggle"></span>${icon(b.root[0])}<span class="label">${b.root[1]}</span></div>` : "";
  const leaves = b.leaves.map(([id, text]) => {
    const off = text[0] === "-";
    return `<div class="node leaf${off ? " off" : ""}">${icon(id)}<span class="label">${off ? text.slice(1) : text}</span></div>`;
  }).join("");
  const count = b.leaves.length + (b.root ? 1 : 0);
  return `<div class="branch${b.marked ? " marked" : ""}" style="flex-grow:${count}">${root}${leaves}</div>`;
}).join("");

const rows = [
  [1, 0, "-0.01100", 1, 690], [1, 690, "-0.01227", 1, 840], [1, 840, "-0.01235", 1, 1040],
  [2, 0, "-0.01245", 2, 2420], [3, 0, "-0.01366", 3, 200], [3, 200, "-0.01376", 3, 350],
  [3, 350, "-0.01383", 3, 1730], [3, 1730, "-0.01383", 3, 1880], [3, 1880, "-0.01376", 3, 2080],
  [4, 0, "-0.01366", 4, 2420], [5, 0, "-0.01245", 5, 200], [5, 200, "-0.01235", 5, 350], [5, 350, "-0.01227", 5, 1040],
];
document.getElementById("rows").innerHTML = rows.map((r, i) =>
  `<tr><td class="name">SLAB_W${i + 1}</td><td><select class="kind-pick" aria-label="하중종류 ${i + 1}"><option>분포하중</option></select></td>` +
  [r[0], r[1], r[2], "0.00000", "0.00000", r[3], r[4]].map((v) => `<td>${v}</td>`).join("") + "</tr>").join("");

// Load diagram of the cross section.
const out = [];
const path = (cls, d) => out.push(`<path class="${cls}" d="${d}"/>`);
const text = (x, y, s, cls = "d-text") => out.push(`<text class="${cls}" x="${x}" y="${y}">${s}</text>`);
const supports = [399.5, 444.5, 548.5, 639.5, 743.5, 788.5];

path("d-gray", "M399.5 208V151.500H418.500V208M769.500 208V151.500H788.500V208");
const ticks = [399.5, 429.5, 435.5, 444.5, 548.5, 557.5, 563.5, 624.5, 630.5, 639.5, 743.5, 751.5, 758.5, 788.5];
path("d-red", "M399.5 113.500H788.500" + ticks.map((x) => `M${x} 113V140`).join(""));
path("d-red", "M399.5 301.500H788.500" + supports.map((x) => `M${x} 276V301`).join(""));
path("d-dot", ticks.map((x) => `M${x - 1.5} 112h3v3h-3z`).join("") + supports.map((x) => `M${x - 1.5} 300h3v3h-3z`).join(""));
[[414, "690"], [432, "150"], [496, "2,420"], [553, "200"], [594, "1,380"], [628, "150"], [691, "2,420"], [748, "200"], [773, "690"]].forEach(([x, s]) => text(x, 112, s));
[[440, "200"], [561, "150"], [634, "200"], [756, "150"]].forEach(([x, s]) => text(x, 123, s));
[[422, "1,040"], [496, "2,420"], [594, "2,080"], [691, "2,420"], [766, "1,040"]].forEach(([x, s]) => text(x, 300, s));

const curve = [[399.5, 162], [414.5, 159], [429.5, 156.5], [435.5, 156], [444.5, 155.5], [461.5, 154.5], [479.5, 153.5],
  [496.5, 152.5], [513.5, 151.5], [531.5, 151], [548.5, 149.5], [557.5, 149.5], [563.5, 149.5], [583.5, 149.5], [604.5, 149.5],
  [624.5, 149.5], [630.5, 149.5], [639.5, 149.5], [656.5, 151], [674.5, 151.5], [691.5, 152.5], [708.5, 154], [726.5, 155],
  [743.5, 156], [751.5, 156.5], [758.5, 157], [773.5, 159], [788.5, 162]];
path("d-cyan", "M" + curve.map((p) => p.join(" ")).join("L") + "M399.5 208.500H788.500" + curve.map(([x, y]) => `M${x} ${y}V208`).join(""));
path("d-tip", curve.map(([x]) => `M${x - 2} 203h4l-1 5h-2z`).join(""));

[[395, 1], [440, 2], [544, 3], [634, 4], [738, 5], [783, 6]].forEach(([x, n]) => text(x, 206, n));
[[422, 1], [496, 2], [594, 3], [691, 4], [766, 5]].forEach(([x, n]) => {
  path("d-red", `M${x - 6.5} 218.500l3-5.500h7l3 5.500-3 5.500h-7z`);
  text(x, 222, n);
});
[[444.5, "G11"], [548.5, "G12"], [639.5, "G21"], [743.5, "G22"]].forEach(([x, s]) => {
  path("d-red", `M${x - 12} 242.500l4-5.500h16l4 5.500-4 5.500h-16zM${x} 237V213`);
  path("d-dot", `M${x} 211l2 6h-4z`);
  text(x, 246, s);
});
path("d-gray", "M196.500 295.500V263.500H192.500L204.500 248.500L215.500 263.500H211.500V295.500ZM196.500 279.500H228.500V276.500L244.500 287.500L228.500 299.500V295.500H196.500");
text(204, 266, "Y", "d-white"); text(204, 278, "W", "d-white"); text(228, 291, "X", "d-white");
document.getElementById("drawing").innerHTML = out.join("");
```
